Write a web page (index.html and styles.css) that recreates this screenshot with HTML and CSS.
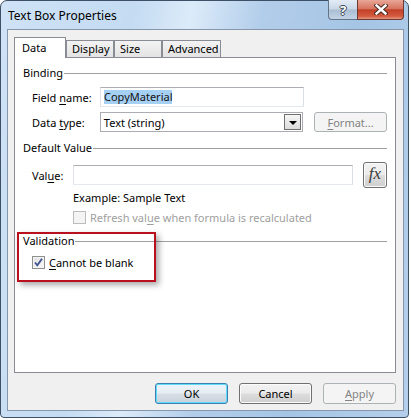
FILE: index.html
```html
<!DOCTYPE html>
<html lang="en">
<head>
  <meta charset="UTF-8" />
  <title>Text Box Properties</title>
  <link rel="stylesheet" href="styles.css">
</head>
<body>

  <div class="window">
    <div class="titlebar">
      <span class="title">Text Box Properties</span>
      <div class="caption-buttons">
        <div class="cap-btn help">?</div>
        <div class="cap-btn close">
          <svg width="14" height="11" viewBox="0 0 14 11">
            <path d="M2.5 1.5 L11.5 9.5 M11.5 1.5 L2.5 9.5" stroke="#4a2b26" stroke-width="4.4" stroke-linecap="square" fill="none"/>
            <path d="M2.5 1.5 L11.5 9.5 M11.5 1.5 L2.5 9.5" stroke="#ffffff" stroke-width="2.4" stroke-linecap="square" fill="none"/>
          </svg>
        </div>
      </div>
    </div>

    <div class="client">
      <div class="tabs">
        <div class="tab active">Data</div>
        <div class="tab">Display</div>
        <div class="tab">Size</div>
        <div class="tab wide">Advanced</div>
      </div>

      <div class="panel">
        <!-- Binding -->
        <div class="group-title">Binding</div>
        <div class="row field-row">
          <span class="lbl">Field <u>n</u>ame:</span>
          <div class="textbox"><span class="selected">CopyMaterial</span></div>
        </div>
        <div class="row type-row">
          <span class="lbl">Data <u>t</u>ype:</span>
          <div class="textbox combo">
            <span>Text (string)</span>
            <span class="drop-btn"><span class="arrow"></span></span>
          </div>
          <button class="btn disabled format"><u>F</u>ormat...</button>
        </div>

        <!-- Default Value -->
        <div class="group-title default-title">Default Value</div>
        <div class="row value-row">
          <span class="lbl short">Val<u>u</u>e:</span>
          <div class="textbox value-box"></div>
          <button class="btn fx-btn">fx</button>
        </div>
        <div class="example">Example: Sample Text</div>
        <div class="check-row refresh">
          <span class="checkbox off"></span>
          <span>Refresh val<u>u</u>e when formula is recalculated</span>
        </div>

        <!-- Validation -->
        <div class="group-title validation-title">Validation</div>
        <div class="check-row blank">
          <span class="checkbox">
            <svg width="11" height="11" viewBox="0 0 11 11">
              <path d="M2 5.5 L4.3 8.3 L9 1.8" stroke="#3f5591" stroke-width="1.9" fill="none"/>
            </svg>
          </span>
          <span><u>C</u>annot be blank</span>
        </div>

        <div class="highlight"></div>
      </div>

      <div class="footer">
        <button class="btn default">OK</button>
        <button class="btn">Cancel</button>
        <button class="btn disabled"><u>A</u>pply</button>
      </div>
    </div>
  </div>

</body>
</html>
```

FILE: styles.css
```css
body {
  margin: 0;
  background: #ffffff;
  font-family: "Noto Sans", "Open Sans", sans-serif;
  font-size: 11px;
  color: #000;
}

u {
  text-decoration-thickness: 1px;
  text-underline-offset: 2px;
}

/* Window frame */
.window {
  width: 409px;
  height: 418px;
  box-sizing: border-box;
  border: 1px solid #3e5066;
  border-radius: 7px 7px 4px 4px;
  padding: 0 4px 6px 6px;
  display: flex;
  flex-direction: column;
  background: linear-gradient(100deg, #cfe2f6 0%, #c4dbf2 28%, #dcebf9 40%, #b2cdea 55%, #a6c5e5 75%, #b4cfeb 100%);
}

.titlebar {
  height: 28px;
  display: flex;
  justify-content: space-between;
  align-items: flex-start;
  padding-left: 1px;
}

.title {
  margin-top: 7px;
  font-size: 12px;
  line-height: 16px;
}

.caption-buttons {
  display: flex;
  margin-top: -1px;
}

.cap-btn {
  height: 20px;
  box-sizing: border-box;
  display: flex;
  align-items: center;
  justify-content: center;
  border: 1px solid #627489;
  border-top: none;
}

.cap-btn.help {
  width: 29px;
  border-right: none;
  border-radius: 0 0 0 4px;
  background: linear-gradient(#e3ecf6 0%, #c9d7e6 48%, #aabdd2 52%, #c3d4e6 100%);
  color: #fff;
  font-weight: bold;
  font-size: 13px;
  text-shadow: 1px 0 0 #3b4756, -1px 0 0 #3b4756, 0 1px 0 #3b4756, 0 -1px 0 #3b4756;
}

.cap-btn.close {
  width: 47px;
  border-color: #6d3b33;
  border-radius: 0 0 4px 0;
  background: linear-gradient(#e9a697 0%, #d77560 45%, #c24128 52%, #d35a3f 85%, #e49a7f 100%);
}

/* Client area */
.client {
  flex: 1;
  display: flex;
  flex-direction: column;
  background: #f0f0f0;
  border: 1px solid #8797ab;
  padding: 7px 7px 6px 6px;
}

.tabs {
  display: flex;
  align-items: flex-end;
  height: 20px;
}

.tab {
  width: 48px;
  height: 17px;
  box-sizing: border-box;
  border: 1px solid #898c95;
  border-bottom: none;
  padding-left: 5px;
  line-height: 16px;
  background: linear-gradient(#f3f3f3, #e3e3e3);
}

.tab.wide {
  width: 59px;
}

.tab.active {
  width: 52px;
  height: 21px;
  margin-bottom: -1px;
  padding-left: 7px;
  padding-top: 2px;
  background: #ffffff;
  position: relative;
  z-index: 1;
}

.panel {
  position: relative;
  flex: 1;
  background: #ffffff;
  border: 1px solid #898c95;
  padding: 8px 8px 0 8px;
  display: flex;
  flex-direction: column;
}

.group-title {
  height: 14px;
  line-height: 14px;
  display: flex;
  align-items: center;
}

.group-title::after {
  content: "";
  flex: 1;
  height: 1px;
  margin-left: 1px;
  background: #a0a0a0;
}

.row {
  display: flex;
  align-items: center;
  padding-left: 9px;
}

.lbl {
  width: 68px;
}

.lbl.short {
  width: 41px;
}

.field-row {
  margin-top: 7px;
  height: 20px;
}

.type-row {
  margin-top: 5px;
  height: 20px;
}

.textbox {
  width: 204px;
  height: 20px;
  box-sizing: border-box;
  border: 1px solid #abadb3;
  border-color: #abadb3 #dbdfe6 #e3e9ef #e2e3ea;
  padding-left: 3px;
  display: flex;
  align-items: center;
  background: #fff;
}

.selected {
  background: #a5cff3;
  line-height: 14px;
  color: #111;
}

.combo {
  justify-content: space-between;
  padding-right: 1px;
  border-color: #abadb3;
}

.drop-btn {
  width: 17px;
  height: 16px;
  box-sizing: border-box;
  border: 1px solid #707070;
  background: linear-gradient(#f6f6f6, #dcdcdc);
  display: flex;
  align-items: center;
  justify-content: center;
}

.arrow {
  width: 0;
  height: 0;
  border-left: 4px solid transparent;
  border-right: 4px solid transparent;
  border-top: 4px solid #000;
  margin-top: 1px;
}

.btn {
  width: 73px;
  height: 21px;
  box-sizing: border-box;
  border: 1px solid #707070;
  border-radius: 3px;
  background: linear-gradient(#f2f2f2 0%, #ebebeb 49%, #dddddd 51%, #cfcfcf 100%);
  box-shadow: inset 0 0 0 1px #fbfbfb;
  font-family: inherit;
  font-size: 11px;
  color: #000;
  padding: 0;
}

.btn.default {
  border-color: #3c7fb1;
  box-shadow: inset 0 0 0 1px #5fdcfc;
  background: linear-gradient(#eef4f9 0%, #e6edf3 49%, #d7dfe6 51%, #c9d2da 100%);
}

.btn.disabled {
  border-color: #adb2b5;
  background: #f4f4f4;
  box-shadow: none;
  color: #838383;
}

.format {
  margin-left: 11px;
  height: 20px;
}

.default-title {
  margin-top: 9px;
}

.value-row {
  margin-top: 7px;
  height: 26px;
}

.value-box {
  width: 280px;
}

.fx-btn {
  width: 24px;
  height: 26px;
  margin-left: 10px;
  font-family: "Liberation Serif", "DejaVu Serif", serif;
  font-style: italic;
  font-size: 17px;
  color: #3a3a3a;
  padding-bottom: 2px;
}

.example {
  margin-top: 3px;
  padding-left: 50px;
  height: 14px;
  line-height: 14px;
}

.check-row {
  display: flex;
  align-items: center;
  height: 13px;
  line-height: 13px;
  gap: 4px;
}

.check-row.refresh {
  margin-top: 6px;
  padding-left: 50px;
  color: #a0a0a0;
}

.checkbox {
  width: 13px;
  height: 13px;
  box-sizing: border-box;
  border: 1px solid #8e8f8f;
  background: linear-gradient(135deg, #e0e0e0, #fafafa);
  box-shadow: inset 0 0 0 1px #f4f4f4;
  display: flex;
  align-items: center;
  justify-content: center;
}

.checkbox.off {
  border-color: #bcbcbc;
  background: #f4f4f4;
  box-shadow: none;
}

.validation-title {
  margin-top: 10px;
}

.check-row.blank {
  margin-top: 8px;
  padding-left: 9px;
}

/* annotation drawn over the group */
.highlight {
  position: absolute;
  left: 2px;
  top: 174px;
  width: 139px;
  height: 50px;
  box-sizing: border-box;
  border: 2px solid #b8101c;
  box-shadow: 3px 3px 6px rgba(0, 0, 0, 0.35);
}

.footer {
  margin-top: 10px;
  display: flex;
  justify-content: flex-end;
  gap: 11px;
}
```
